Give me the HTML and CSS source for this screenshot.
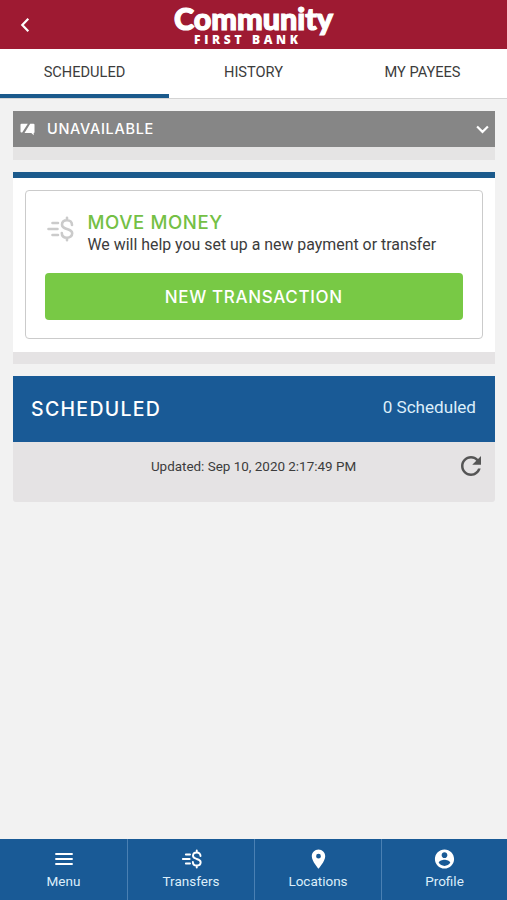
FILE: index.html
```html
<!DOCTYPE html>
<html lang="en">
<head>
  <meta charset="UTF-8">
  <meta name="viewport" content="width=device-width, initial-scale=1.0">
  <title>Community First Bank</title>
  <link rel="stylesheet" href="styles.css">
</head>
<body>
  <svg class="sprite" width="0" height="0">
    <symbol id="icon-transfer" viewBox="0 0 28 26">
      <g fill="none" stroke="currentColor" stroke-width="2.6" stroke-linecap="round">
        <path d="M6.5 7H12M2.5 13H11.5M6.5 19H12"/>
        <path d="M26 9C26 6 24 4.3 21 4.3C18 4.3 16 6 16 8.7C16 11.5 18.5 12.2 21 13C23.7 13.8 26.2 14.7 26.2 17.3C26.2 20 24 21.7 21 21.7C18 21.7 15.8 20 15.8 17M21 1.7V4M21 22V24.3"/>
      </g>
    </symbol>
  </svg>

  <header class="header">
    <button class="back" aria-label="Back">
      <svg width="10" height="16" viewBox="0 0 10 16"><path d="M8.3 1.8L2.3 8L8.3 14.2" fill="none" stroke="#fff" stroke-width="2.2"/></svg>
    </button>
    <svg class="logo" width="164" height="49" viewBox="0 0 164 49">
      <text class="logo-name" x="2" y="30" textLength="159" lengthAdjust="spacingAndGlyphs">Community</text>
      <text class="logo-sub" x="22" y="43.5" textLength="104">FIRST BANK</text>
    </svg>
  </header>

  <nav class="tabs">
    <a class="tab active">SCHEDULED</a>
    <a class="tab">HISTORY</a>
    <a class="tab">MY PAYEES</a>
  </nav>

  <main class="content">
    <section class="notice">
      <div class="notice-bar">
        <svg width="15" height="13" viewBox="0 0 15 13"><path d="M1.5 .8H7.8L2.2 9.6H1.5Q.5 9.6 .5 8.6V1.8Q.5 .8 1.5 .8ZM10.2 .8H13.5Q14.5 .8 14.5 1.8V9.2Q14.5 10 13.7 10V12.3L11.3 10H4.5Z" fill="#fff"/></svg>
        <span class="notice-title">UNAVAILABLE</span>
        <svg class="chevron" width="13" height="9" viewBox="0 0 12 8"><path d="M1 1.2L6 6.2L11 1.2" fill="none" stroke="#fff" stroke-width="2"/></svg>
      </div>
    </section>

    <section class="money">
      <div class="money-card">
        <div class="money-info">
          <svg class="money-icon" width="28" height="26"><use href="#icon-transfer"/></svg>
          <div>
            <h2>MOVE MONEY</h2>
            <p>We will help you set up a new payment or transfer</p>
          </div>
        </div>
        <button class="btn-new">NEW TRANSACTION</button>
      </div>
    </section>

    <section class="scheduled">
      <div class="scheduled-head">
        <h2>SCHEDULED</h2>
        <span class="count">0 Scheduled</span>
      </div>
      <div class="scheduled-body">
        <span class="updated">Updated: Sep 10, 2020 2:17:49 PM</span>
        <svg class="refresh" width="30" height="30" viewBox="0 0 24 24"><path d="M17.65 6.35C16.2 4.9 14.21 4 12 4c-4.42 0-7.99 3.58-7.99 8s3.57 8 7.99 8c3.73 0 6.84-2.55 7.73-6h-2.08c-.82 2.33-3.04 4-5.65 4-3.31 0-6-2.69-6-6s2.69-6 6-6c1.66 0 3.14.69 4.22 1.78L13 11h7V4l-2.35 2.35z"/></svg>
      </div>
    </section>
  </main>

  <footer class="bottom-nav">
    <a class="nav-item">
      <svg width="24" height="24" viewBox="0 0 24 24"><path d="M3.3 18.1h17.4v-2.2H3.3zm0-5h17.4v-2.2H3.3zm0-7.2v2.2h17.4V5.9z"/></svg>
      <span>Menu</span>
    </a>
    <a class="nav-item">
      <svg class="nav-transfer" width="21" height="20"><use href="#icon-transfer"/></svg>
      <span>Transfers</span>
    </a>
    <a class="nav-item">
      <svg width="23" height="23" viewBox="0 0 24 24"><path d="M12 2C8.13 2 5 5.13 5 9c0 5.25 7 13 7 13s7-7.75 7-13c0-3.87-3.13-7-7-7zm0 9.5a2.5 2.5 0 0 1 0-5 2.5 2.5 0 0 1 0 5z"/></svg>
      <span>Locations</span>
    </a>
    <a class="nav-item">
      <svg width="23" height="23" viewBox="0 0 24 24"><path d="M12 2C6.48 2 2 6.48 2 12s4.48 10 10 10 10-4.48 10-10S17.52 2 12 2zm0 3c1.66 0 3 1.34 3 3s-1.34 3-3 3-3-1.34-3-3 1.34-3 3-3zm0 14.2c-2.5 0-4.71-1.28-6-3.22.03-1.99 4-3.08 6-3.08 1.99 0 5.97 1.09 6 3.08-1.29 1.94-3.5 3.22-6 3.22z"/></svg>
      <span>Profile</span>
    </a>
  </footer>
</body>
</html>
```

FILE: styles.css
```css
* {
  box-sizing: border-box;
}

body {
  margin: 0;
  height: 100vh;
  display: flex;
  flex-direction: column;
  font-family: Roboto, sans-serif;
  background-color: #f2f2f2;
  color: #3c3c3c;
}

h2,
p {
  margin: 0;
}

button {
  border: none;
  padding: 0;
  cursor: pointer;
}

.sprite {
  display: none;
}

.header {
  display: grid;
  grid-template-columns: 50px 1fr 50px;
  align-items: center;
  height: 49px;
  background-color: #9e1a32;
}

.back {
  display: flex;
  justify-content: center;
  background: none;
}

.logo {
  justify-self: center;
  fill: #fff;
}

.logo-name {
  font-family: Lato, sans-serif;
  font-weight: 900;
  font-size: 30px;
  stroke: #fff;
  stroke-width: 1.2px;
}

.logo-sub {
  font-family: "Open Sans", sans-serif;
  font-weight: 800;
  font-size: 12px;
}

.tabs {
  display: grid;
  grid-template-columns: repeat(3, 1fr);
  height: 50px;
  background-color: #fff;
  border-bottom: 1px solid #d4d4d4;
}

.tab {
  height: 49px;
  padding-top: 14px;
  font-size: 14.6px;
  line-height: 18px;
  text-align: center;
}

.tab.active {
  border-bottom: 4px solid #1b5a8c;
}

.content {
  flex: 1;
  padding: 12px 12px 0 13px;
}

.notice {
  height: 49px;
  margin-bottom: 12px;
  background-color: #e5e4e4;
}

.notice-bar {
  display: flex;
  align-items: center;
  height: 36px;
  padding: 0 6px 0 7px;
  background-color: #868686;
}

.notice-title {
  margin: -1px 0 0 12px;
  font-family: Inter, sans-serif;
  font-size: 14.5px;
  font-weight: 500;
  letter-spacing: 0.7px;
  color: #fff;
}

.chevron {
  margin-left: auto;
}

.money {
  height: 192px;
  margin-bottom: 12px;
  padding: 12px;
  border-top: 6px solid #1b5a8c;
  border-bottom: 12px solid #e5e3e4;
  background-color: #fff;
}

.money-card {
  height: 149px;
  padding: 20px 19px 0 18.5px;
  border: 1px solid #cbcbcb;
  border-radius: 4px;
}

.money-info {
  display: flex;
  height: 62px;
}

.money-icon {
  margin: 5px 14px 0 1px;
  color: #cbcbcb;
}

.money h2 {
  font-family: Inter, sans-serif;
  font-size: 18.6px;
  font-weight: 500;
  line-height: 22px;
  letter-spacing: 0.6px;
  color: #74c045;
}

.money p {
  font-size: 15.9px;
  line-height: 24px;
  white-space: nowrap;
}

.btn-new {
  display: block;
  width: 100%;
  height: 47px;
  border-radius: 4px;
  background-color: #78c945;
  color: #fff;
  font-family: Inter, sans-serif;
  font-size: 17px;
  font-weight: 500;
  letter-spacing: 0.65px;
}

.scheduled {
  height: 126px;
  border-radius: 0 0 3px 3px;
  background-color: #e5e3e4;
}

.scheduled-head {
  display: flex;
  justify-content: space-between;
  align-items: center;
  height: 66px;
  padding: 0 19px 4px 18px;
  background-color: #195a96;
  color: #fff;
}

.scheduled-head h2 {
  padding-top: 3px;
  font-family: Inter, sans-serif;
  font-size: 19.5px;
  font-weight: 500;
  letter-spacing: 1.3px;
}

.count {
  font-size: 17.1px;
  color: #dceefa;
}

.scheduled-body {
  display: grid;
  grid-template-columns: 48px 1fr 49px;
  align-items: center;
  height: 49px;
}

.updated {
  grid-column: 2;
  font-size: 13.45px;
  text-align: center;
}

.refresh {
  justify-self: center;
  margin-top: -2px;
  fill: #555;
}

.bottom-nav {
  display: grid;
  grid-template-columns: 128px 127px 127px 1fr;
  height: 61px;
  background-color: #195a96;
}

.nav-item {
  display: flex;
  flex-direction: column;
  align-items: center;
  padding-top: 8px;
  border-right: 1px solid #4a80b3;
  font-size: 13.5px;
  color: #dceefa;
}

.nav-item:last-child {
  border-right: none;
}

.nav-item svg {
  height: 24px;
  fill: #fff;
  color: #fff;
}

.nav-item .nav-transfer {
  height: 20px;
  margin: 2px 0;
}

.nav-item span {
  margin-top: 2px;
  line-height: 16px;
}
```
